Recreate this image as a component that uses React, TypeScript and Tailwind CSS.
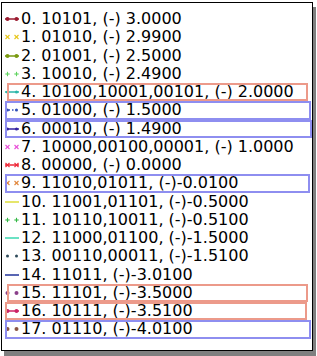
import React from 'react';

type Marker = 'o' | 'x' | '+' | '.' | 'none';

interface Entry {
  label: string;
  color: string;
  marker: Marker;
  line: 'solid' | 'dotted' | 'none';
  box?: 'red' | 'blue';
  boxClass?: string;
}

const entries: Entry[] = [
  { label: '0. 10101, (-) 3.0000', color: '#9b1b30', marker: 'o', line: 'solid' },
  { label: '1. 01010, (-) 2.9900', color: '#e6c619', marker: 'x', line: 'none' },
  { label: '2. 01001, (-) 2.5000', color: '#7a9a10', marker: 'o', line: 'solid' },
  { label: '3. 10010, (-) 2.4900', color: '#5fd35f', marker: '+', line: 'none' },
  { label: '4. 10100,10001,00101, (-) 2.0000', color: '#2ab5a8', marker: '.', line: 'solid', box: 'red', boxClass: 'left-[2px] right-[4px]' },
  { label: '5. 01000, (-) 1.5000', color: '#2f4fb8', marker: '.', line: 'dotted', box: 'blue', boxClass: 'left-0 right-[1px]' },
  { label: '6. 00010, (-) 1.4900', color: '#3322a0', marker: '.', line: 'solid', box: 'blue', boxClass: 'left-0 right-0' },
  { label: '7. 10000,00100,00001, (-) 1.0000', color: '#e84fd8', marker: 'x', line: 'none' },
  { label: '8. 00000, (-) 0.0000', color: '#ee2a3a', marker: 'x', line: 'solid' },
  { label: '9. 11010,01011, (-)-0.0100', color: '#e0853a', marker: 'x', line: 'none', box: 'blue', boxClass: 'left-0 right-[2px]' },
  { label: '10. 11001,01101, (-)-0.5000', color: '#dede3a', marker: 'none', line: 'solid' },
  { label: '11. 10110,10011, (-)-0.5100', color: '#33b844', marker: '+', line: 'none' },
  { label: '12. 11000,01100, (-)-1.5000', color: '#3ad8b0', marker: 'none', line: 'solid' },
  { label: '13. 00110,00011, (-)-1.5100', color: '#2e4a5a', marker: '.', line: 'none' },
  { label: '14. 11011, (-)-3.0100', color: '#22339a', marker: 'none', line: 'solid' },
  { label: '15. 11101, (-)-3.5000', color: '#8a3f8a', marker: 'o', line: 'none', box: 'red', boxClass: 'left-[2px] right-[4px]' },
  { label: '16. 10111, (-)-3.5100', color: '#cc2266', marker: 'o', line: 'solid', box: 'red', boxClass: 'left-0 right-[5px]' },
  { label: '17. 01110, (-)-4.0100', color: '#8a5544', marker: 'o', line: 'none', box: 'blue', boxClass: 'left-0 right-[1px]' },
];

const MarkerGlyph: React.FC<{ m: Marker; x: number; c: string }> = ({ m, x, c }) => {
  const y = 9;
  if (m === 'o') return <circle cx={x} cy={y} r={2} fill={c} />;
  if (m === '.') return <circle cx={x} cy={y} r={1.5} fill={c} />;
  if (m === 'x')
    return (
      <g stroke={c} strokeWidth={1.1}>
        <line x1={x - 2} y1={y - 2} x2={x + 2} y2={y + 2} />
        <line x1={x - 2} y1={y + 2} x2={x + 2} y2={y - 2} />
      </g>
    );
  if (m === '+')
    return (
      <g stroke={c} strokeWidth={1.1}>
        <line x1={x - 2.2} y1={y} x2={x + 2.2} y2={y} />
        <line x1={x} y1={y - 2.2} x2={x} y2={y + 2.2} />
      </g>
    );
  return null;
};

const Handle: React.FC<{ e: Entry }> = ({ e }) => (
  <svg width="15" height="18" viewBox="0 0 15 18" className="shrink-0">
    {e.line !== 'none' && (
      <line
        x1={0}
        y1={9}
        x2={14}
        y2={9}
        stroke={e.color}
        strokeWidth={1.5}
        strokeDasharray={e.line === 'dotted' ? '1.5 2' : undefined}
      />
    )}
    <MarkerGlyph m={e.marker} x={2.5} c={e.color} />
    <MarkerGlyph m={e.marker} x={11.5} c={e.color} />
  </svg>
);

export default function App() {
  return (
    <div className="w-[317px] h-[356px] bg-white relative">
      <div className="absolute left-[4px] top-[5px] w-[312px] h-[349px] bg-[#7f7f7f]" />
      <div
        className="relative ml-[1px] mt-[2px] w-[312px] h-[349px] border border-black bg-white pt-[7px] pl-[3px]"
        style={{ fontFamily: '"DejaVu Sans", sans-serif' }}
      >
        {entries.map((e) => (
          <div key={e.label} className="relative flex items-center h-[18.25px]">
            <Handle e={e} />
            <span className="text-[16px] leading-[18.25px] text-black whitespace-nowrap pl-[1px]">{e.label}</span>
            {e.box && (
              <div
                className={`absolute top-0 bottom-0 border-2 ${e.box === 'red' ? 'border-[#ec9a8a]' : 'border-[#8e8ef0]'} ${e.boxClass ?? ''}`}
              />
            )}
          </div>
        ))}
      </div>
    </div>
  );
}
